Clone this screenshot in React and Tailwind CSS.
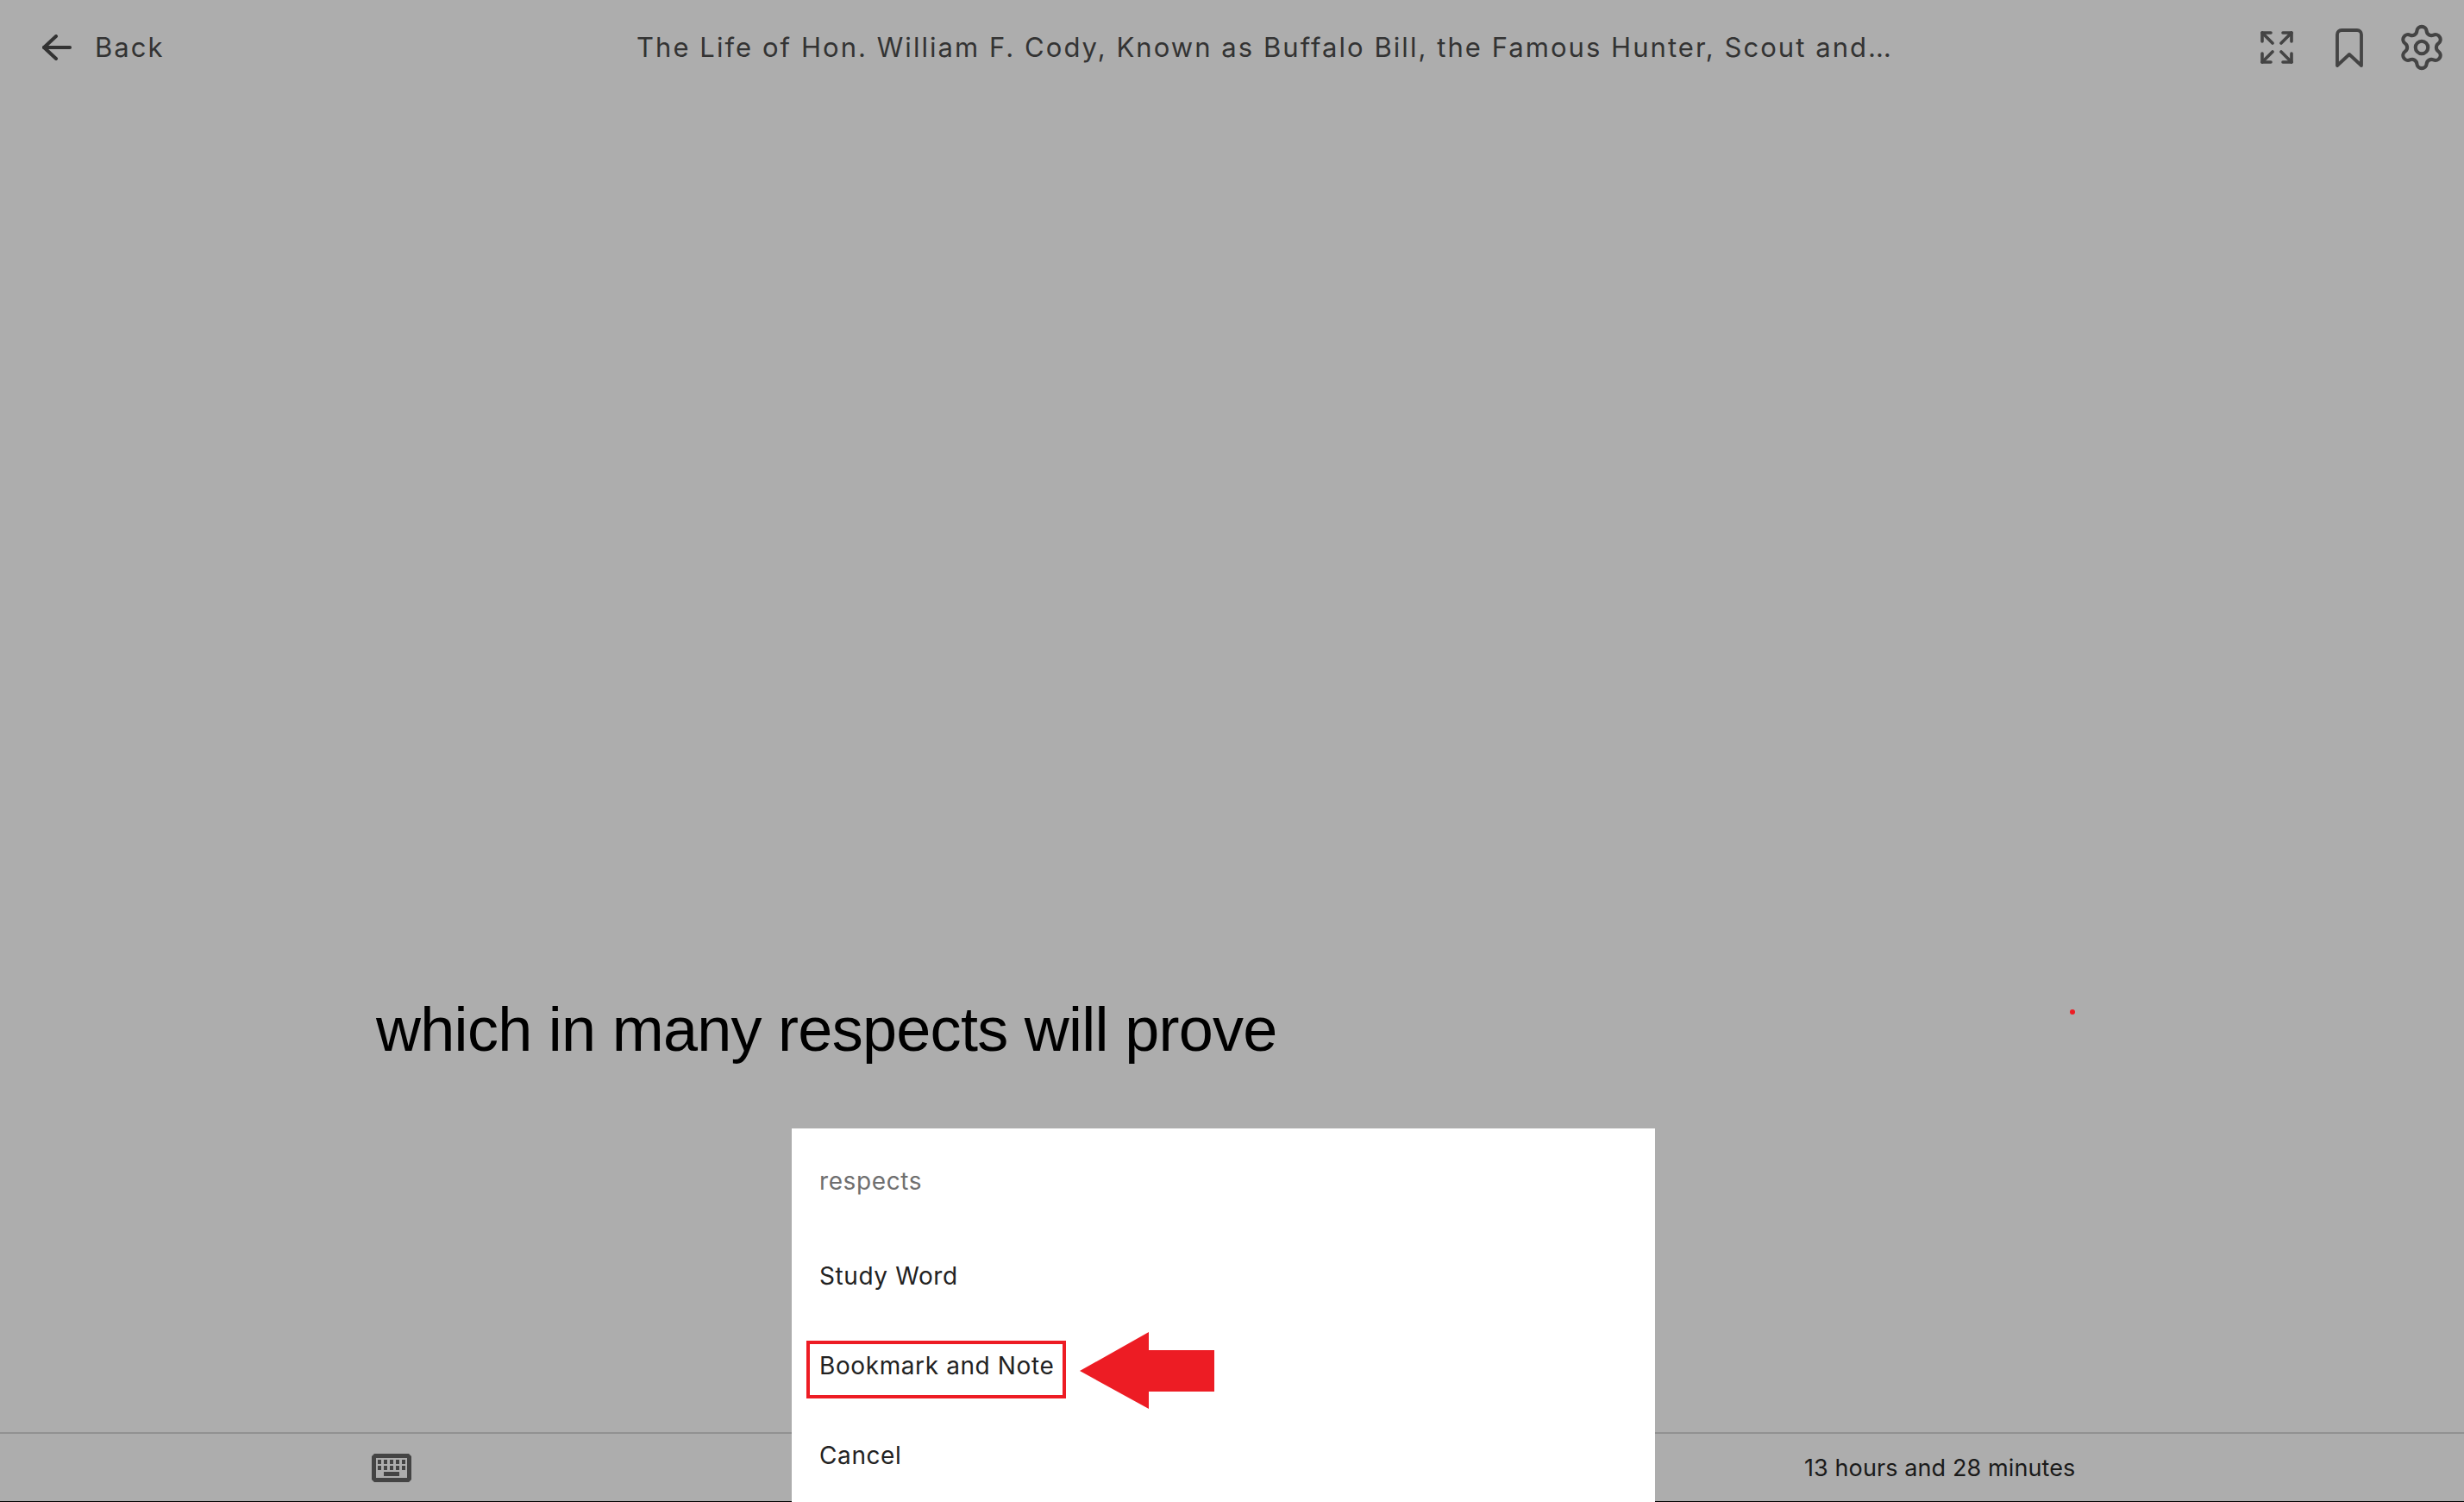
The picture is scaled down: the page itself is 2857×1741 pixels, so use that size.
import { Settings } from "lucide-react";

const ArrowBack = () => (
  <svg width="34" height="30" viewBox="0 0 34 30" fill="none" stroke="#333333" strokeWidth="4" strokeLinecap="round" strokeLinejoin="round">
    <path d="M32 15H2" />
    <path d="M16 2 2 15l14 13" />
  </svg>
);

const ExpandIcon = () => (
  <svg width="38" height="38" viewBox="0 0 38 38" fill="none" stroke="#444444" strokeWidth="3.6" strokeLinecap="round" strokeLinejoin="round">
    <path d="M2 12V2h10" />
    <path d="M2 2l12 12" />
    <path d="M26 2h10v10" />
    <path d="M36 2 24 14" />
    <path d="M2 26v10h10" />
    <path d="M2 36l12-12" />
    <path d="M26 36h10V26" />
    <path d="M36 36 24 24" />
  </svg>
);

const BookmarkIcon = () => (
  <svg width="32" height="45" viewBox="0 0 32 45" fill="none" stroke="#444444" strokeWidth="3.8" strokeLinecap="round" strokeLinejoin="round">
    <path d="M2 43V7a5 5 0 0 1 5-5h18a5 5 0 0 1 5 5v36L16 30z" />
  </svg>
);

const KeyboardIcon = () => (
  <svg width="46" height="33" viewBox="0 0 46 33" fill="#444444">
    <path fillRule="evenodd" d="M3 0h40l3 3v27l-3 3H3l-3-3V3zM5 5v23h36V5z" />
    <rect x="7" y="7" width="4" height="5" />
    <rect x="14" y="7" width="4" height="5" />
    <rect x="21" y="7" width="4" height="5" />
    <rect x="28" y="7" width="4" height="5" />
    <rect x="35" y="7" width="4" height="5" />
    <rect x="7" y="14" width="4" height="5" />
    <rect x="14" y="14" width="4" height="5" />
    <rect x="21" y="14" width="4" height="5" />
    <rect x="28" y="14" width="4" height="5" />
    <rect x="35" y="14" width="4" height="5" />
    <rect x="14" y="21" width="18" height="5" />
  </svg>
);

const RedArrow = () => (
  <svg width="156" height="89" viewBox="0 0 156 89" fill="#ed1c24">
    <path d="M0 45 80 0v21h76v48H80v20z" />
  </svg>
);

const App = () => {
  return (
    <div className="relative flex h-[1741px] w-full flex-col overflow-hidden bg-[#adadad] font-['Inter',sans-serif]">
      <header className="flex h-[110px] shrink-0 items-center">
        <div className="ml-[49px] flex w-[689px] items-center gap-[27px]">
          <ArrowBack />
          <span className="text-[31px] tracking-[2px] text-[#333333]">Back</span>
        </div>
        <h1 className="text-[31px] font-normal tracking-[2.05px] whitespace-nowrap text-[#333333]">
          The Life of Hon. William F. Cody, Known as Buffalo Bill, the Famous Hunter, Scout and…
        </h1>
        <div className="ml-auto mr-[20px] flex items-center">
          <ExpandIcon />
          <span className="ml-[49px]">
            <BookmarkIcon />
          </span>
          <Settings size={58} strokeWidth={1.7} color="#444444" className="ml-[39px]" />
        </div>
      </header>

      <main className="flex-1 pl-[436px] pt-[1033px]">
        <p className="font-['Liberation_Sans',sans-serif] text-[72px] leading-[100px] tracking-[-0.72px] whitespace-nowrap text-black">
          which in many respects will prove
        </p>
      </main>

      <footer className="flex h-[81px] shrink-0 items-center border-t-2 border-b border-t-[#919191] border-b-black">
        <div className="ml-[431px]">
          <KeyboardIcon />
        </div>
        <span className="ml-[1615px] pt-[2px] text-[27px] tracking-[0.1px] text-[#1a1a1a]">13 hours and 28 minutes</span>
      </footer>

      {/* marker dot left over on the reading pane */}
      <div className="absolute left-[2400px] top-[1170px] h-[6px] w-[6px] rounded-full bg-[#ed1c24]" />

      <div className="absolute bottom-0 left-[918px] top-[1308px] flex w-[1001px] flex-col bg-white pl-[32px] pt-[9px] text-[28px] tracking-[0.6px]">
        <div className="mb-[6px] flex h-[104px] items-center text-[#6f6f6f]">respects</div>
        <div className="flex h-[104px] items-center text-[#222222]">Study Word</div>
        <div className="flex h-[104px] items-center text-[#222222]">Bookmark and Note</div>
        <div className="flex h-[104px] items-center text-[#222222]">Cancel</div>
        <div className="absolute left-[17px] top-[246px] h-[67px] w-[301px] border-4 border-[#ed1c24]" />
        <div className="absolute left-[334px] top-[236px]">
          <RedArrow />
        </div>
      </div>
    </div>
  );
};

export default App;
